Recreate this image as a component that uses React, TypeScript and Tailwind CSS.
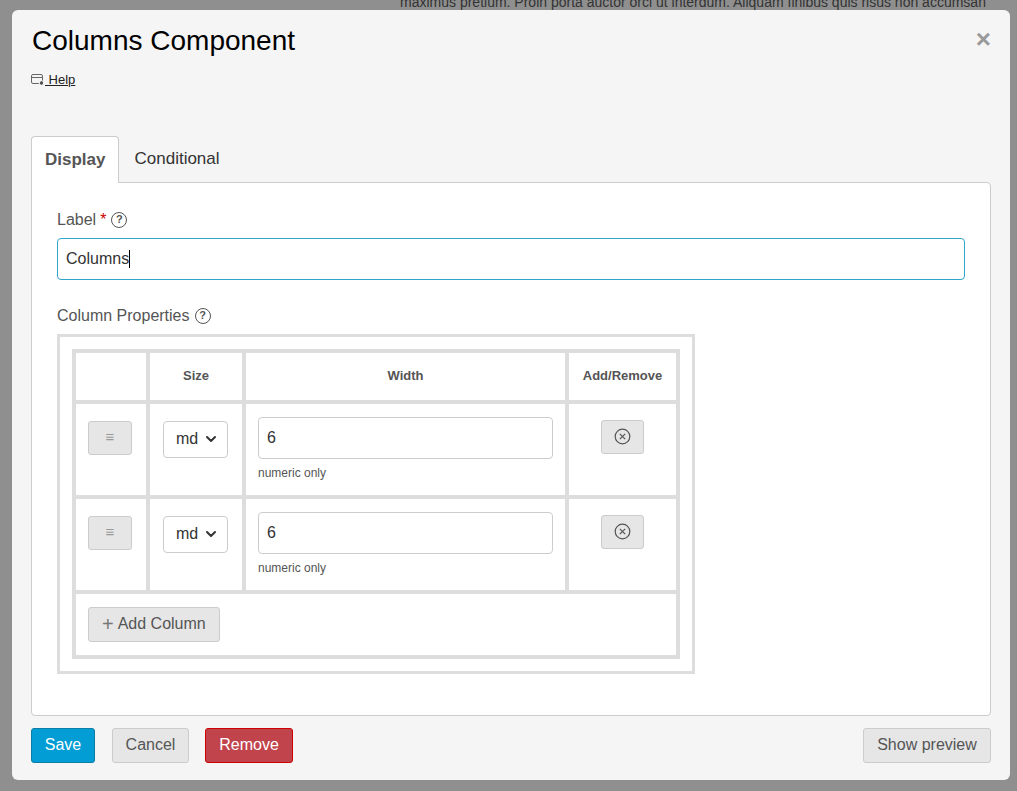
import { ChevronDown } from 'lucide-react';

function Question() {
  return (
    <span className="inline-flex items-center justify-center w-[16px] h-[16px] rounded-full border-[1.5px] border-[#555] text-[11px] font-bold text-[#555] leading-none ml-[5px]">?</span>
  );
}

function Row() {
  return (
    <tr className="h-[95px]">
      <td className="border-[4px] border-[#ddd] align-top px-[12px] pt-[17px]">
        <div className="w-[44px] h-[34px] bg-[#e6e6e6] border border-[#ccc] rounded-[3px] flex items-center justify-center text-[#999] text-[15px]">≡</div>
      </td>
      <td className="border-[4px] border-[#ddd] align-top px-[13px] pt-[17px]">
        <div className="w-[65px] h-[37px] bg-white border border-[#ccc] rounded-[4px] flex items-center justify-between pl-[12px] pr-[8px] text-[16px] text-[#333]">
          md <ChevronDown className="w-4 h-4" strokeWidth={3} />
        </div>
      </td>
      <td className="border-[4px] border-[#ddd] align-top px-[12px] pt-[13px]">
        <div className="h-[42px] bg-white border border-[#ccc] rounded-[4px] flex items-center px-[8px] text-[16px] text-[#333]">6</div>
        <div className="text-[12px] text-[#555] mt-[5px]">numeric only</div>
      </td>
      <td className="border-[4px] border-[#ddd] align-top pt-[16px]">
        <div className="mx-auto w-[43px] h-[34px] bg-[#e6e6e6] border border-[#ccc] rounded-[3px] flex items-center justify-center">
          <svg width="17" height="17" viewBox="0 0 17 17" fill="none" stroke="#555" strokeWidth="1.2">
            <circle cx="8.5" cy="8.5" r="7.3" />
            <path d="M5.8 5.8l5.4 5.4M11.2 5.8l-5.4 5.4" />
          </svg>
        </div>
      </td>
    </tr>
  );
}

export default function App() {
  return (
    <div className="w-[1017px] h-[791px] bg-[#8f8f8f] relative overflow-hidden" style={{ fontFamily: '"Liberation Sans", Arial, sans-serif' }}>
      <div className="absolute left-[400px] -top-[8px] w-[617px] overflow-hidden text-[#333] text-[14px] whitespace-nowrap">maximus pretium. Proin porta auctor orci ut interdum. Aliquam finibus quis risus non accumsan</div>
      <div className="absolute left-[12px] top-[10px] w-[998px] h-[770px] bg-[#f5f5f5] rounded-[6px] px-[19px] pt-[14px]">
        <button className="absolute right-[19px] top-[16px] text-[26px] font-bold text-[#999] leading-none">×</button>
        <h1 className="text-[28px] text-black leading-[34px] ml-[1px]">Columns Component</h1>
        <a className="flex items-center text-[13px] text-[#222] mt-[12px] w-fit">
          <svg width="14" height="12" viewBox="0 0 14 12" fill="none" stroke="#666" strokeWidth="1">
            <rect x="0.5" y="0.5" width="11" height="9" rx="1.5" />
            <path d="M0.5 3.5h11" />
            <circle cx="10.5" cy="9" r="2.3" fill="#555" stroke="#fff" />
          </svg>
          <span className="underline">&nbsp;Help</span>
        </a>
        <div className="mt-[46px] flex">
          <div className="h-[47px] px-[13px] border border-[#ccc] border-b-0 rounded-t-[4px] bg-white flex items-center text-[17px] font-bold text-[#555] relative z-10 -mb-px">Display</div>
          <div className="h-[46px] px-[15px] flex items-center text-[17px] text-[#333]">Conditional</div>
        </div>
        <div className="h-[534px] bg-white border border-[#ccc] rounded-b-[4px] rounded-tr-[4px] px-[25px] pt-[25px]">
          <div className="flex items-center text-[16px] text-[#555]">Label <span className="text-[#c00] ml-[4px]">*</span><Question /></div>
          <div className="mt-[6px] h-[42px] border border-[#31a4c9] rounded-[4px] flex items-center px-[8px] text-[16px] text-[#333]">Columns<span className="w-px h-[18px] bg-black" /></div>
          <div className="mt-[24px] flex items-center text-[16px] text-[#555]">Column Properties<Question /></div>
          <div className="mt-[6px] w-[638px] border-[3px] border-[#ddd] p-[12px]">
            <table className="w-full border-collapse border-[4px] border-[#ddd]">
              <thead>
                <tr className="h-[51px] text-[13px] font-bold text-[#555]">
                  <th className="border-[4px] border-[#ddd] w-[74px]"></th>
                  <th className="border-[4px] border-[#ddd] w-[96px]">Size</th>
                  <th className="border-[4px] border-[#ddd]">Width</th>
                  <th className="border-[4px] border-[#ddd] w-[111px]">Add/Remove</th>
                </tr>
              </thead>
              <tbody>
                <Row />
                <Row />
                <tr className="h-[65px]">
                  <td colSpan={4} className="border-[4px] border-[#ddd] px-[12px]">
                    <button className="h-[35px] px-[13px] bg-[#e6e6e6] border border-[#ccc] rounded-[3px] text-[16px] text-[#555] flex items-center gap-[4px]">
                      <span className="text-[20px] font-light leading-none text-[#777]">+</span> Add Column
                    </button>
                  </td>
                </tr>
              </tbody>
            </table>
          </div>
        </div>
        <div className="mt-[12px] flex items-center">
          <button className="h-[35px] w-[64px] bg-[#019dd4] border border-[#0b7ea5] rounded-[3px] text-white text-[16px]">Save</button>
          <button className="ml-[17px] h-[35px] w-[77px] bg-[#e6e6e6] border border-[#ccc] rounded-[3px] text-[#555] text-[16px]">Cancel</button>
          <button className="ml-[16px] h-[35px] w-[88px] bg-[#c1444d] border border-[#c00] rounded-[3px] text-white text-[16px]">Remove</button>
          <button className="ml-auto h-[35px] w-[128px] bg-[#e6e6e6] border border-[#ccc] rounded-[3px] text-[#555] text-[16px]">Show preview</button>
        </div>
      </div>
    </div>
  );
}
